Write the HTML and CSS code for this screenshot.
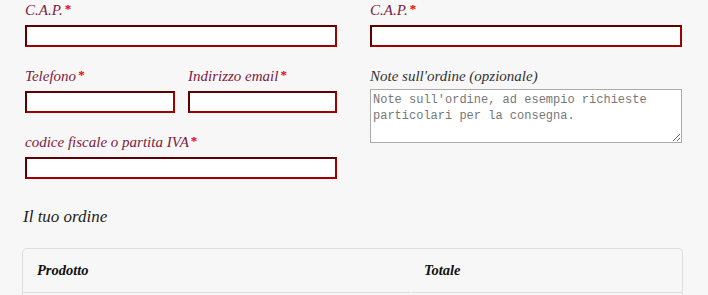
FILE: index.html
```html
<!DOCTYPE html>
<html lang="it">
<head>
  <meta charset="UTF-8">
  <meta name="viewport" content="width=device-width, initial-scale=1.0">
  <title>Checkout</title>
  <link rel="stylesheet" href="styles.css">
</head>
<body>
  <div class="checkout">
    <div class="columns">
      <!-- Dati di fatturazione -->
      <div class="col">
        <div class="form-row">
          <label class="req">C.A.P.<abbr>*</abbr></label>
          <input type="text" class="input-text">
        </div>
        <div class="form-split">
          <div class="form-row">
            <label class="req">Telefono<abbr>*</abbr></label>
            <input type="tel" class="input-text">
          </div>
          <div class="form-row">
            <label class="req">Indirizzo email<abbr>*</abbr></label>
            <input type="email" class="input-text">
          </div>
        </div>
        <div class="form-row">
          <label class="req">codice fiscale o partita IVA<abbr>*</abbr></label>
          <input type="text" class="input-text">
        </div>
      </div>

      <!-- Spedizione / note -->
      <div class="col">
        <div class="form-row">
          <label class="req">C.A.P.<abbr>*</abbr></label>
          <input type="text" class="input-text">
        </div>
        <div class="form-row">
          <label class="note-label">Note sull'ordine (opzionale)</label>
          <textarea class="notes" placeholder="Note sull'ordine, ad esempio richieste particolari per la consegna."></textarea>
        </div>
      </div>
    </div>

    <h3 class="order-title">Il tuo ordine</h3>

    <div class="order-box">
      <table class="order-table">
        <thead>
          <tr>
            <th class="col-product">Prodotto</th>
            <th class="col-total">Totale</th>
          </tr>
        </thead>
        <tbody>
          <tr>
            <td></td>
            <td></td>
          </tr>
        </tbody>
      </table>
    </div>
  </div>
</body>
</html>
```

FILE: styles.css
```css
body {
  margin: 0;
  padding: 0;
  background-color: #f7f7f7;
  font-family: "Liberation Serif", "DejaVu Serif", serif;
  font-style: italic;
  font-size: 15px;
  color: #333;
}

.checkout {
  width: 661px;
  margin-left: 22px;
}

.columns {
  display: grid;
  grid-template-columns: 312px 312px;
  column-gap: 33px;
  margin-left: 3px;
}

.form-row {
  margin-bottom: 19px;
}

.form-row label {
  display: block;
  height: 20px;
  line-height: 20px;
  margin-bottom: 5px;
}

.form-row label.req {
  color: #7d2040;
}

.form-row label abbr {
  color: #e00;
  font-style: normal;
  font-weight: bold;
  font-size: 13px;
  line-height: 0;
  text-decoration: none;
  margin-left: 2px;
  vertical-align: 2px;
}

.form-split {
  display: grid;
  grid-template-columns: 150px 149px;
  column-gap: 13px;
}

.input-text {
  display: block;
  box-sizing: border-box;
  width: 100%;
  height: 22px;
  margin: 0;
  padding: 2px 4px;
  background-color: #fff;
  border: 2px solid #a00000;
  border-top-color: #5c0000;
  border-left-color: #5c0000;
  font-size: 13px;
}

.form-row label.note-label {
  margin-bottom: 3px;
}

.notes {
  display: block;
  box-sizing: border-box;
  width: 100%;
  height: 54px;
  margin: 0;
  padding: 2px 2px;
  border: 1px solid #aaa;
  background-color: #fff;
  font-family: "Liberation Mono", "DejaVu Sans Mono", monospace;
  font-style: normal;
  font-size: 12px;
  line-height: 16px;
  color: #333;
}

.notes::placeholder {
  color: #777;
}

.order-title {
  margin: 7px 0 0 1px;
  font-size: 17px;
  font-weight: normal;
  line-height: 24px;
  color: #222;
}

.order-box {
  margin-top: 19px;
  border: 1px solid #dedede;
  border-bottom: none;
  border-radius: 5px 5px 0 0;
  height: 46px;
  overflow: hidden;
}

.order-table {
  width: 100%;
  border-collapse: separate;
  border-spacing: 0;
}

.order-table th {
  text-align: left;
  font-weight: bold;
  color: #111;
  font-size: 14.5px;
  padding: 12px 14px 13px;
  line-height: 18px;
  border-bottom: 1px solid #dedede;
}

.order-table th.col-product {
  width: 359px;
  border-right: 2px solid #f7f7f7;
}

.order-table th.col-total {
  padding-left: 12px;
}
```
